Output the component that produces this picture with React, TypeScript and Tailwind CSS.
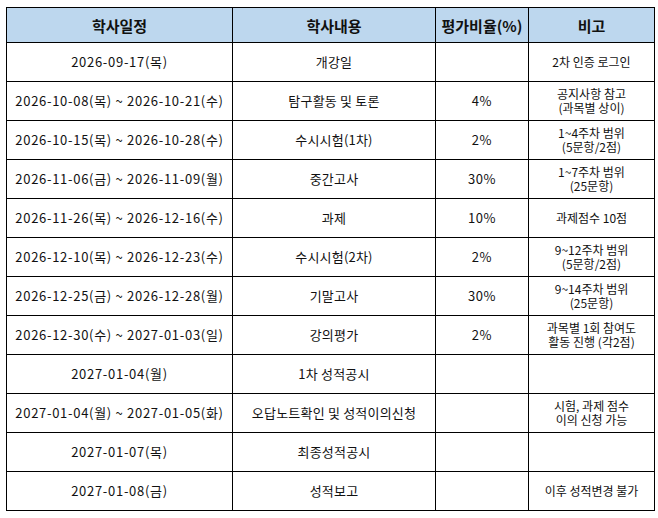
import React from "react";

type Row = {
  date: string;
  content: string;
  ratio?: string;
  note?: string[];
};

const rows: Row[] = [
  { date: "2026-09-17(목)", content: "개강일", note: ["2차 인증 로그인"] },
  {
    date: "2026-10-08(목) ~ 2026-10-21(수)",
    content: "탐구활동 및 토론",
    ratio: "4%",
    note: ["공지사항 참고", "(과목별 상이)"],
  },
  {
    date: "2026-10-15(목) ~ 2026-10-28(수)",
    content: "수시시험(1차)",
    ratio: "2%",
    note: ["1~4주차 범위", "(5문항/2점)"],
  },
  {
    date: "2026-11-06(금) ~ 2026-11-09(월)",
    content: "중간고사",
    ratio: "30%",
    note: ["1~7주차 범위", "(25문항)"],
  },
  {
    date: "2026-11-26(목) ~ 2026-12-16(수)",
    content: "과제",
    ratio: "10%",
    note: ["과제점수 10점"],
  },
  {
    date: "2026-12-10(목) ~ 2026-12-23(수)",
    content: "수시시험(2차)",
    ratio: "2%",
    note: ["9~12주차 범위", "(5문항/2점)"],
  },
  {
    date: "2026-12-25(금) ~ 2026-12-28(월)",
    content: "기말고사",
    ratio: "30%",
    note: ["9~14주차 범위", "(25문항)"],
  },
  {
    date: "2026-12-30(수) ~ 2027-01-03(일)",
    content: "강의평가",
    ratio: "2%",
    note: ["과목별 1회 참여도", "활동 진행 (각2점)"],
  },
  { date: "2027-01-04(월)", content: "1차 성적공시" },
  {
    date: "2027-01-04(월) ~ 2027-01-05(화)",
    content: "오답노트확인 및 성적이의신청",
    note: ["시험, 과제 점수", "이의 신청 가능"],
  },
  { date: "2027-01-07(목)", content: "최종성적공시" },
  { date: "2027-01-08(금)", content: "성적보고", note: ["이후 성적변경 불가"] },
];

const cell = "border border-black text-center align-middle p-0";

export default function App() {
  return (
    <div className="w-[658px] h-[518px] bg-white pl-[6px] pt-[7px] font-['Noto_Sans_CJK_KR','Liberation_Sans',sans-serif] text-[#111]">
      <table className="table-fixed border-collapse w-[648px]">
        <colgroup>
          <col className="w-[226px]" />
          <col className="w-[203px]" />
          <col className="w-[93px]" />
          <col className="w-[126px]" />
        </colgroup>
        <thead>
          <tr className="h-[35px] bg-[#bdd7ee]">
            {["학사일정", "학사내용", "평가비율(%)", "비고"].map((h) => (
              <th key={h} className={`${cell} text-[15px] font-bold leading-none`}>
                {h}
              </th>
            ))}
          </tr>
        </thead>
        <tbody>
          {rows.map((r) => (
            <tr key={r.date + r.content} className="h-[39px]">
              <td className={`${cell} text-[13px] tracking-[0.7px]`}>{r.date}</td>
              <td className={`${cell} text-[13px] tracking-[0.2px]`}>{r.content}</td>
              <td className={`${cell} text-[13px] tracking-[0.6px]`}>{r.ratio}</td>
              <td className={`${cell} text-[12px] leading-[14px]`}>
                {r.note?.map((n) => (
                  <div key={n}>{n}</div>
                ))}
              </td>
            </tr>
          ))}
        </tbody>
      </table>
    </div>
  );
}
